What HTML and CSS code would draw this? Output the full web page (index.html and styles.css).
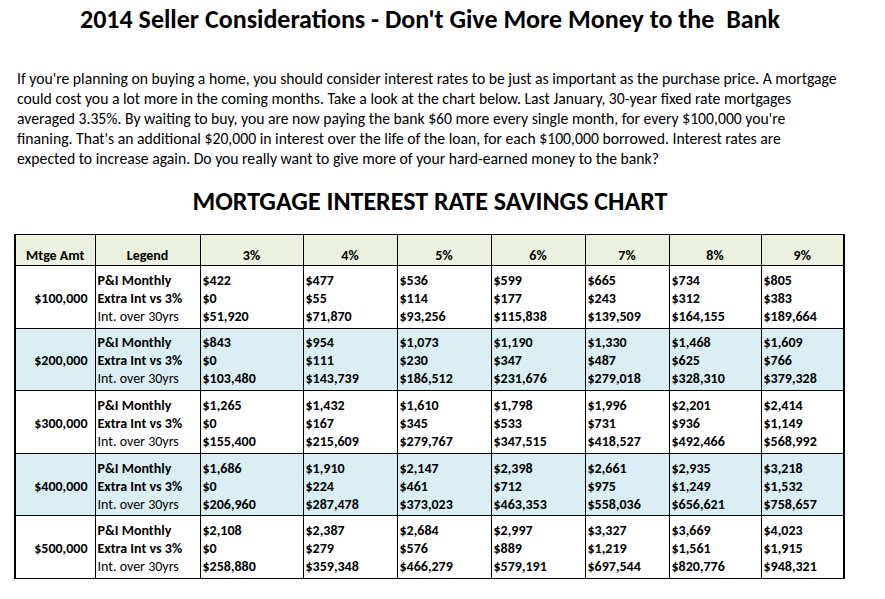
FILE: index.html
```html
<!DOCTYPE html>
<html>
<head>
<meta charset="utf-8">
<link rel="stylesheet" href="styles.css">
</head>
<body>
<div class="page">
  <h1 class="title">2014 Seller Considerations - Don't Give More Money to the&nbsp; Bank</h1>
  <p class="intro">If you're planning on buying a home, you should consider interest rates to be just as important as the purchase price. A mortgage<br>could cost you a lot more in the coming months. Take a look at the chart below. Last January, 30-year fixed rate mortgages<br>averaged 3.35%. By waiting to buy, you are now paying the bank $60 more every single month, for every $100,000 you're<br>finaning. That's an additional $20,000 in interest over the life of the loan, for each $100,000 borrowed. Interest rates are<br>expected to increase again. Do you really want to give more of your hard-earned money to the bank?</p>
  <h2 class="chart-title">MORTGAGE INTEREST RATE SAVINGS CHART</h2>
  <table class="chart">
    <colgroup>
      <col class="c-amt"><col class="c-leg"><col class="c-3"><col class="c-4"><col class="c-5"><col class="c-6"><col class="c-7"><col class="c-8"><col class="c-9">
    </colgroup>
    <thead>
      <tr><th>Mtge Amt</th><th>Legend</th><th>3%</th><th>4%</th><th>5%</th><th>6%</th><th>7%</th><th>8%</th><th>9%</th></tr>
    </thead>
    <tbody>
      <tr>
        <td class="amt">$100,000</td>
        <td class="leg"><b>P&amp;I Monthly</b><br><b>Extra Int vs 3%</b><br>Int. over 30yrs</td>
        <td>$422<br>$0<br>$51,920</td>
        <td>$477<br>$55<br>$71,870</td>
        <td>$536<br>$114<br>$93,256</td>
        <td>$599<br>$177<br>$115,838</td>
        <td>$665<br>$243<br>$139,509</td>
        <td>$734<br>$312<br>$164,155</td>
        <td>$805<br>$383<br>$189,664</td>
      </tr>
      <tr class="alt">
        <td class="amt">$200,000</td>
        <td class="leg"><b>P&amp;I Monthly</b><br><b>Extra Int vs 3%</b><br>Int. over 30yrs</td>
        <td>$843<br>$0<br>$103,480</td>
        <td>$954<br>$111<br>$143,739</td>
        <td>$1,073<br>$230<br>$186,512</td>
        <td>$1,190<br>$347<br>$231,676</td>
        <td>$1,330<br>$487<br>$279,018</td>
        <td>$1,468<br>$625<br>$328,310</td>
        <td>$1,609<br>$766<br>$379,328</td>
      </tr>
      <tr>
        <td class="amt">$300,000</td>
        <td class="leg"><b>P&amp;I Monthly</b><br><b>Extra Int vs 3%</b><br>Int. over 30yrs</td>
        <td>$1,265<br>$0<br>$155,400</td>
        <td>$1,432<br>$167<br>$215,609</td>
        <td>$1,610<br>$345<br>$279,767</td>
        <td>$1,798<br>$533<br>$347,515</td>
        <td>$1,996<br>$731<br>$418,527</td>
        <td>$2,201<br>$936<br>$492,466</td>
        <td>$2,414<br>$1,149<br>$568,992</td>
      </tr>
      <tr class="alt">
        <td class="amt">$400,000</td>
        <td class="leg"><b>P&amp;I Monthly</b><br><b>Extra Int vs 3%</b><br>Int. over 30yrs</td>
        <td>$1,686<br>$0<br>$206,960</td>
        <td>$1,910<br>$224<br>$287,478</td>
        <td>$2,147<br>$461<br>$373,023</td>
        <td>$2,398<br>$712<br>$463,353</td>
        <td>$2,661<br>$975<br>$558,036</td>
        <td>$2,935<br>$1,249<br>$656,621</td>
        <td>$3,218<br>$1,532<br>$758,657</td>
      </tr>
      <tr>
        <td class="amt">$500,000</td>
        <td class="leg"><b>P&amp;I Monthly</b><br><b>Extra Int vs 3%</b><br>Int. over 30yrs</td>
        <td>$2,108<br>$0<br>$258,880</td>
        <td>$2,387<br>$279<br>$359,348</td>
        <td>$2,684<br>$576<br>$466,279</td>
        <td>$2,997<br>$889<br>$579,191</td>
        <td>$3,327<br>$1,219<br>$697,544</td>
        <td>$3,669<br>$1,561<br>$820,776</td>
        <td>$4,023<br>$1,915<br>$948,321</td>
      </tr>
    </tbody>
  </table>
</div>
</body>
</html>
```
FILE: styles.css
```css
html, body {
  margin: 0;
  padding: 0;
  background: #fff;
}
body {
  padding: 0 0 0 8px;
  font-family: Carlito, Lato, "Open Sans", sans-serif;
  color: #000;
}
.page {
  width: 844px;
}
.title {
  margin: 0;
  padding-top: 4px;
  height: 56px;
  box-sizing: border-box;
  text-align: center;
  font-size: 26px;
  font-weight: 700;
  line-height: 30px;
}
.intro {
  margin: 0 0 0 9px;
  font-size: 15.7px;
  line-height: 20px;
  height: 117px;
  padding-top: 13px;
  box-sizing: border-box;
}
.chart-title {
  margin: 0;
  padding-top: 13px;
  height: 61px;
  box-sizing: border-box;
  text-align: center;
  font-size: 26px;
  font-weight: 700;
  line-height: 30px;
}
.chart {
  margin-left: 6px;
  border-collapse: collapse;
  table-layout: fixed;
  width: 829px;
  font-size: 14px;
  border-left: 2px solid #000;
  border-right: 2px solid #000;
}
.c-amt { width: 80px; }
.c-leg { width: 105px; }
.c-3 { width: 103px; }
.c-4 { width: 94px; }
.c-5 { width: 94px; }
.c-6 { width: 94px; }
.c-7 { width: 84px; }
.c-8 { width: 92px; }
.c-9 { width: 83px; }
.chart th, .chart td {
  border: 1px solid #000;
  padding: 0 2px;
}
.chart th {
  background: #ebf1de;
  height: 31px;
  box-sizing: border-box;
  vertical-align: bottom;
  padding-bottom: 0;
  font-weight: 700;
  line-height: 18px;
}
.chart td {
  height: 62.6px;
  box-sizing: border-box;
  vertical-align: middle;
  padding-top: 4px;
  font-weight: 700;
  line-height: 18px;
  text-align: left;
}
.chart td.amt {
  text-align: right;
  padding-right: 7px;
}
.chart td.leg {
  font-weight: 400;
}
.chart tr.alt td {
  background: #daeef3;
}
```
